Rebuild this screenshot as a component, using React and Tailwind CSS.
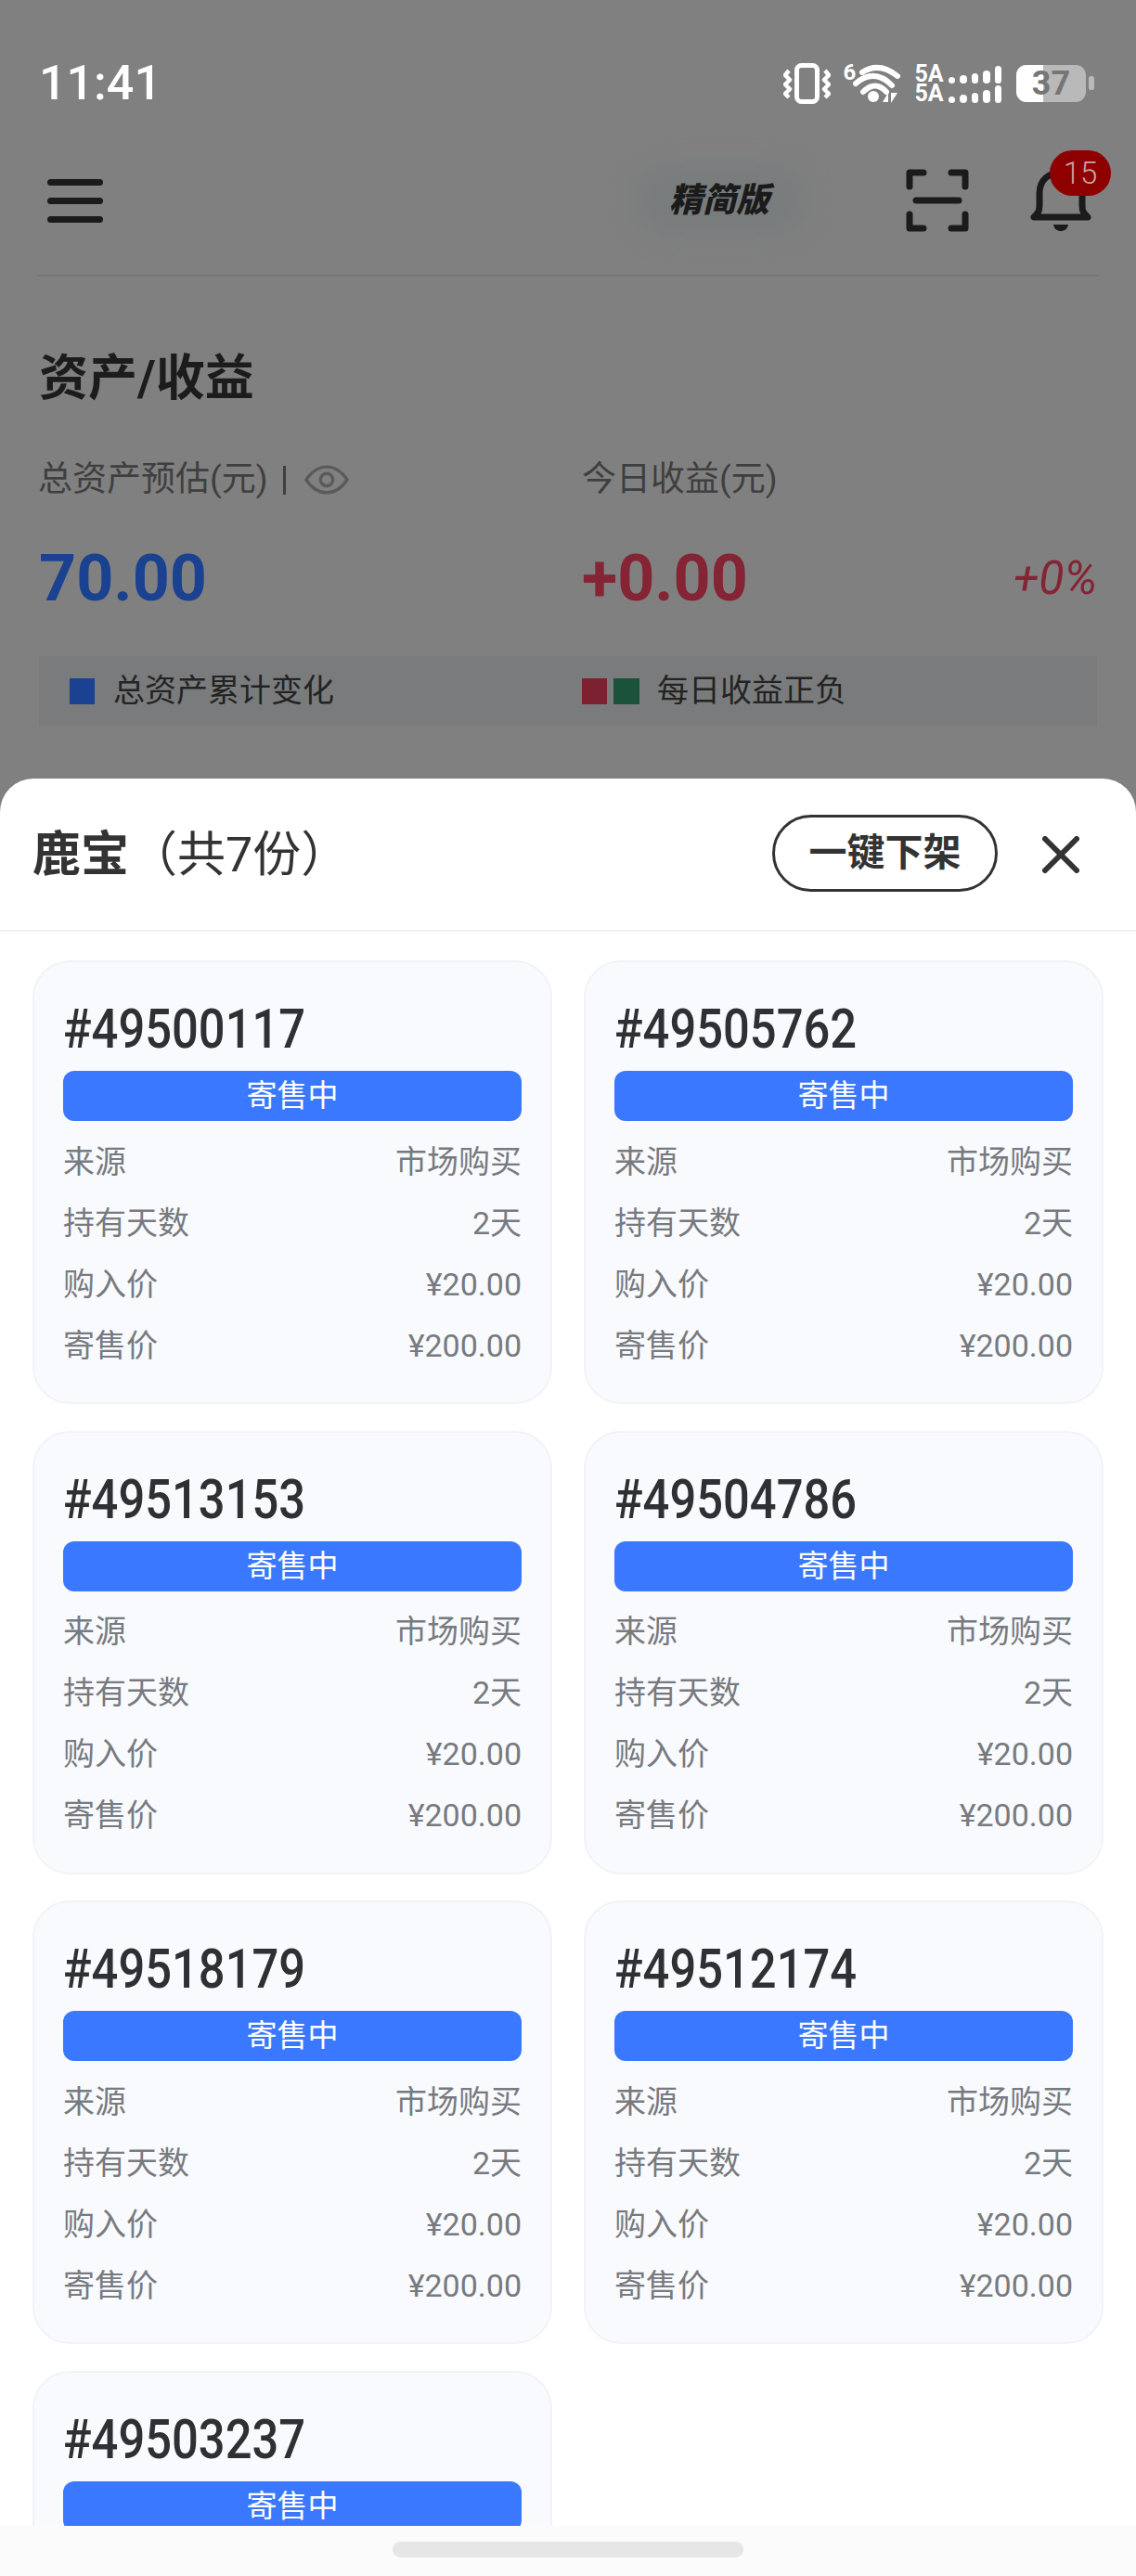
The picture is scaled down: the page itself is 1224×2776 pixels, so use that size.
const sans = 'font-["Roboto","Noto_Sans_CJK_SC",sans-serif]';

const items = ['49500117', '49505762', '49513153', '49504786', '49518179', '49512174', '49503237'];

const bars = ['h-[7px]', 'h-[9px]', 'h-[11px]', 'h-[14px]', 'h-[19px]'];

const SignalRow = () => (
  <div className="flex items-end h-[21px] text-[25px] leading-[21px] font-bold text-white">
    <span className="w-[36px]">5A</span>
    <span className="flex items-end gap-[5px]">
      {bars.map((h) => (
        <span key={h} className={`w-[7.5px] rounded-full bg-white ${h}`} />
      ))}
    </span>
  </div>
);

const StatusIcons = () => (
  <div className="flex items-center">
    {/* vibrate */}
    <svg width="51" height="44" viewBox="0 0 51 44" fill="none" stroke="#fff">
      <rect x="14.5" y="2.5" width="22" height="39" rx="5" strokeWidth="5" />
      <path d="M6 8 L2 13 L7 18 L2 23 L7 28 L2 33 L6 37" strokeWidth="4.5" strokeLinejoin="round" />
      <path d="M45 8 L49 13 L44 18 L49 23 L44 28 L49 33 L45 37" strokeWidth="4.5" strokeLinejoin="round" />
    </svg>
    {/* wifi 6 */}
    <div className="relative ml-[14px] w-[62px] h-[46px]">
      <svg width="62" height="46" viewBox="0 0 62 46" fill="none" stroke="#fff" strokeWidth="6" strokeLinecap="round">
        <path d="M20 11 Q38 -1 58 15" />
        <path d="M13 23 Q33 6 52 25" />
        <path d="M21 32 Q34 19 46 32" />
        <circle cx="32" cy="37" r="6" fill="#fff" stroke="none" />
        <path d="M42 43 L48 33 L48 43 Z M51 33 L58 33 L51 44 Z" fill="#fff" stroke="none" />
      </svg>
      <span className="absolute left-0 top-0 text-[24px] leading-[22px] font-bold text-white">6</span>
    </div>
    {/* 5A signal x2 */}
    <div className="ml-[15px] flex flex-col">
      <SignalRow />
      <SignalRow />
    </div>
    {/* battery */}
    <div className="relative ml-[16px] w-[85px] h-[40px]">
      <svg width="85" height="40" viewBox="0 0 85 40">
        <rect x="0" y="0" width="75" height="40" rx="11" fill="#b9b9b9" />
        <path d="M29 0 H11 A11 11 0 0 0 0 11 V29 A11 11 0 0 0 11 40 H29 Z" fill="#fff" />
        <rect x="78" y="12" width="6" height="15" rx="2.5" fill="#b9b9b9" />
      </svg>
      <span className="absolute left-0 top-0 w-[75px] text-center text-[36px] leading-[40px] font-bold text-[#767676]">37</span>
    </div>
  </div>
);

const Menu = () => (
  <div className="flex flex-col gap-[13px] w-[61px]">
    <div className="h-[7px] rounded-full bg-[#1b1b1b]" />
    <div className="h-[7px] rounded-full bg-[#1b1b1b]" />
    <div className="h-[7px] rounded-full bg-[#1b1b1b]" />
  </div>
);

const Scan = () => (
  <svg width="68" height="68" viewBox="0 0 68 68" fill="none" stroke="#1b1b1b" strokeWidth="7" strokeLinecap="round" strokeLinejoin="round">
    <path d="M4 19 V4 H19" />
    <path d="M49 4 H64 V19" />
    <path d="M4 49 V64 H19" />
    <path d="M49 64 H64 V49" />
    <path d="M11 34 H57" />
  </svg>
);

const Bell = () => (
  <div className="relative w-[66px] h-[68px]">
    <svg width="66" height="68" viewBox="0 0 66 68" fill="none" stroke="#1b1b1b" strokeWidth="7" strokeLinecap="round" strokeLinejoin="round">
      <path d="M4 52 H62 C58 48 56 46 56 40 V26 C56 12 46 4 33 4 C20 4 10 12 10 26 V40 C10 46 8 48 4 52 Z" />
      <path d="M25 60 H41 C40 65 37 67 33 67 C29 67 26 65 25 60 Z" fill="#1b1b1b" stroke="none" />
    </svg>
    <div className="absolute left-[21px] top-[-20px] w-[66px] h-[49px] rounded-full bg-[#8e0000] flex items-center justify-center text-[33px] leading-none text-[#c9a3a3] font-light">
      15
    </div>
  </div>
);

const Eye = () => (
  <svg width="48" height="32" viewBox="0 0 50 33" fill="none" stroke="#5a5a5a" strokeWidth="3.5" className="ml-[20px]">
    <path d="M2 16.5 C9 6 16 2 25 2 C34 2 41 6 48 16.5 C41 27 34 31 25 31 C16 31 9 27 2 16.5 Z" />
    <circle cx="25" cy="16.5" r="7" />
  </svg>
);

const Row = ({ label, value }) => (
  <div className="h-[66px] flex items-center justify-between text-[34px] text-[#777a7e]">
    <span>{label}</span>
    <span>{value}</span>
  </div>
);

// the last card runs under the gesture bar, only its head is on screen
const Card = ({ id, clipped }) => (
  <div className="h-[478px] rounded-[40px] border-2 border-[#f2f3f6] bg-[#f9fafe] px-[31px] pt-[28px]">
    <div className="h-[89px] text-[60px] leading-[88px] font-medium text-[#2f3033] whitespace-nowrap origin-left scale-x-[0.845]">#{id}</div>
    <div className="h-[54px] rounded-[12px] bg-[#3a78ff] text-white text-[33px] flex items-center justify-center">寄售中</div>
    {!clipped && (
      <div className="mt-[11px]">
        <Row label="来源" value="市场购买" />
        <Row label="持有天数" value="2天" />
        <Row label="购入价" value="¥20.00" />
        <Row label="寄售价" value="¥200.00" />
      </div>
    )}
  </div>
);

export default function App() {
  return (
    <div className={`relative w-[1224px] h-[2776px] overflow-hidden bg-[#808080] ${sans}`}>
      <div className="h-[839px] flex flex-col">
        {/* status bar */}
        <div className="mt-[58px] h-[64px] flex items-center justify-between pl-[42px] pr-[44px]">
          <span className="text-[52px] font-medium text-white leading-none">11:41</span>
          <StatusIcons />
        </div>

        {/* top nav */}
        <div className="mt-[60px] h-[68px] flex items-center pl-[51px] pr-[48px]">
          <Menu />
          <div className="relative ml-[610px] w-[108px] text-center">
            <div className="absolute left-[-40px] top-[-16px] w-[190px] h-[76px] rounded-full bg-[#797c7d] blur-md" />
            <span className="relative text-[36px] leading-[44px] font-black italic text-[#1b1b1b] whitespace-nowrap">精简版</span>
          </div>
          <div className="ml-[147px]"><Scan /></div>
          <div className="ml-[66px]"><Bell /></div>
        </div>
        <div className="mt-[46px] mx-[41px] h-[2px] bg-[#767676]" />

        {/* assets */}
        <div className="px-[42px] mt-[80px]">
          <h2 className="text-[53px] leading-[60px] font-bold text-[#1c1c1c]">资产/收益</h2>
          <div className="grid grid-cols-[585px_1fr] mt-[59px]">
            <div className="flex items-center h-[40px] text-[37px] text-[#3f3f3f] -ml-[1px]">
              <span>总资产预估(元)</span>
              <span className="ml-[16px] w-[3px] h-[31px] bg-[#3f3f3f]" />
              <Eye />
            </div>
            <div className="h-[40px] flex items-center text-[37px] text-[#3f3f3f]">今日收益(元)</div>
          </div>
          <div className="grid grid-cols-[585px_1fr] mt-[46px] h-[80px] items-center">
            <div className="text-[70px] leading-[80px] font-bold text-[#1a4290]">70.00</div>
            <div className="flex items-center justify-between">
              <span className="text-[70px] leading-[80px] font-bold text-[#842435]">+0.00</span>
              <span className="text-[50px] italic text-[#842435]">+0%</span>
            </div>
          </div>
          <div className="grid grid-cols-[585px_1fr] mt-[44px] h-[75px] bg-[#7a7b7c] items-center">
            <div className="flex items-center pl-[33px] text-[34px] text-[#232323]">
              <span className="w-[27px] h-[28px] bg-[#1a4290]" />
              <span className="ml-[20px]">总资产累计变化</span>
            </div>
            <div className="flex items-center text-[34px] text-[#232323]">
              <span className="w-[27px] h-[28px] bg-[#7d2130]" />
              <span className="ml-[7px] w-[28px] h-[28px] bg-[#1a523a]" />
              <span className="ml-[19px]">每日收益正负</span>
            </div>
          </div>
        </div>
      </div>

      {/* bottom sheet */}
      <div className="h-[1937px] bg-white rounded-t-[36px] overflow-hidden">
        <div className="h-[165px] border-b-2 border-[#f0f0f0] flex items-center pl-[35px] pr-[61px]">
          <div className="text-[52px] text-[#333333] whitespace-nowrap pt-[3px]">
            <span className="font-bold">鹿宝</span>
            <span>（共7份）</span>
          </div>
          <button className="ml-auto mb-[2px] w-[243px] h-[83px] rounded-full border-[3px] border-[#333333] text-[41px] font-bold text-[#333333]">
            一键下架
          </button>
          <svg width="40" height="40" viewBox="0 0 40 40" fill="none" stroke="#333333" strokeWidth="6" strokeLinecap="round" className="ml-[48px]">
            <path d="M3 3 L37 37 M37 3 L3 37" />
          </svg>
        </div>
        <div className="grid grid-cols-2 gap-x-[34px] gap-y-[28.5px] pl-[35px] pr-[35px] pt-[31px]">
          {items.map((id, i) => (
            <Card key={id} id={id} clipped={i === items.length - 1} />
          ))}
        </div>
      </div>

      {/* gesture bar */}
      <div className="absolute left-0 right-0 bottom-0 h-[54px] bg-[#fbfbfb] flex justify-center pt-[17px]">
        <div className="w-[378px] h-[17px] rounded-full bg-[#e6e6e6]" />
      </div>
    </div>
  );
}
